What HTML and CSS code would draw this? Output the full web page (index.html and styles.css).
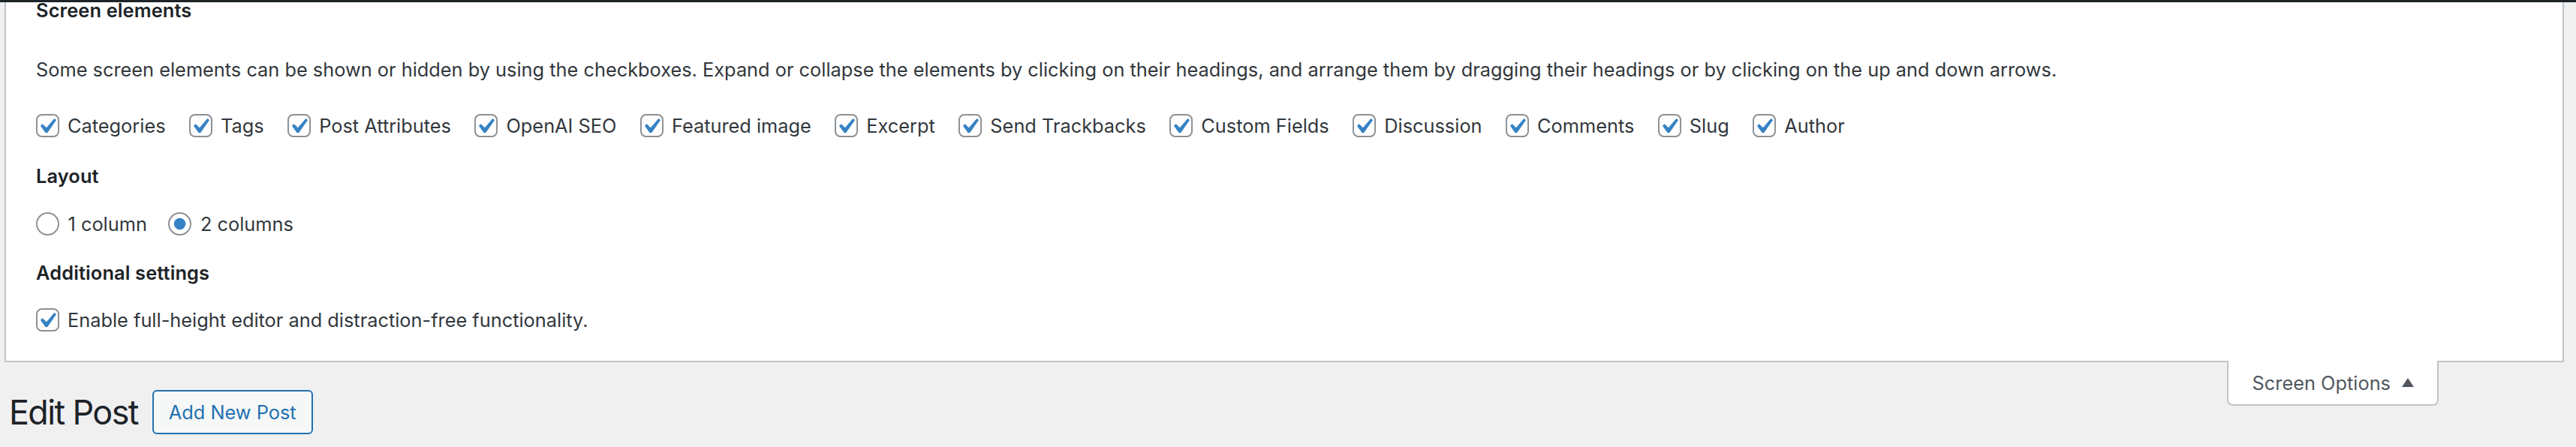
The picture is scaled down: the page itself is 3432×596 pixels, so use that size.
FILE: index.html
```html
<!DOCTYPE html>
<html lang="en">
<head>
<meta charset="utf-8">
<title>Edit Post</title>
<link rel="stylesheet" href="styles.css">
</head>
<body>
<div class="adminbar"></div>
<div class="screen-meta">
  <h5 class="legend first">Screen elements</h5>
  <p class="desc">Some screen elements can be shown or hidden by using the checkboxes. Expand or collapse the elements by clicking on their headings, and arrange them by dragging their headings or by clicking on the up and down arrows.</p>
  <div class="prefs row-elements">
    <label class="pref"><svg class="cb" viewBox="0 0 16 16"><rect x="0.5" y="0.5" width="15" height="15" rx="3.5"/><path transform="translate(-3 -2) scale(1.05)" d="M14.83 4.89l1.34.94-5.81 8.38H9.02L5.78 9.67l1.34-1.25 2.57 2.4z"/></svg><span>Categories</span></label>
    <label class="pref"><svg class="cb" viewBox="0 0 16 16"><rect x="0.5" y="0.5" width="15" height="15" rx="3.5"/><path transform="translate(-3 -2) scale(1.05)" d="M14.83 4.89l1.34.94-5.81 8.38H9.02L5.78 9.67l1.34-1.25 2.57 2.4z"/></svg><span>Tags</span></label>
    <label class="pref"><svg class="cb" viewBox="0 0 16 16"><rect x="0.5" y="0.5" width="15" height="15" rx="3.5"/><path transform="translate(-3 -2) scale(1.05)" d="M14.83 4.89l1.34.94-5.81 8.38H9.02L5.78 9.67l1.34-1.25 2.57 2.4z"/></svg><span>Post Attributes</span></label>
    <label class="pref"><svg class="cb" viewBox="0 0 16 16"><rect x="0.5" y="0.5" width="15" height="15" rx="3.5"/><path transform="translate(-3 -2) scale(1.05)" d="M14.83 4.89l1.34.94-5.81 8.38H9.02L5.78 9.67l1.34-1.25 2.57 2.4z"/></svg><span>OpenAI SEO</span></label>
    <label class="pref"><svg class="cb" viewBox="0 0 16 16"><rect x="0.5" y="0.5" width="15" height="15" rx="3.5"/><path transform="translate(-3 -2) scale(1.05)" d="M14.83 4.89l1.34.94-5.81 8.38H9.02L5.78 9.67l1.34-1.25 2.57 2.4z"/></svg><span>Featured image</span></label>
    <label class="pref"><svg class="cb" viewBox="0 0 16 16"><rect x="0.5" y="0.5" width="15" height="15" rx="3.5"/><path transform="translate(-3 -2) scale(1.05)" d="M14.83 4.89l1.34.94-5.81 8.38H9.02L5.78 9.67l1.34-1.25 2.57 2.4z"/></svg><span>Excerpt</span></label>
    <label class="pref"><svg class="cb" viewBox="0 0 16 16"><rect x="0.5" y="0.5" width="15" height="15" rx="3.5"/><path transform="translate(-3 -2) scale(1.05)" d="M14.83 4.89l1.34.94-5.81 8.38H9.02L5.78 9.67l1.34-1.25 2.57 2.4z"/></svg><span>Send Trackbacks</span></label>
    <label class="pref"><svg class="cb" viewBox="0 0 16 16"><rect x="0.5" y="0.5" width="15" height="15" rx="3.5"/><path transform="translate(-3 -2) scale(1.05)" d="M14.83 4.89l1.34.94-5.81 8.38H9.02L5.78 9.67l1.34-1.25 2.57 2.4z"/></svg><span>Custom Fields</span></label>
    <label class="pref"><svg class="cb" viewBox="0 0 16 16"><rect x="0.5" y="0.5" width="15" height="15" rx="3.5"/><path transform="translate(-3 -2) scale(1.05)" d="M14.83 4.89l1.34.94-5.81 8.38H9.02L5.78 9.67l1.34-1.25 2.57 2.4z"/></svg><span>Discussion</span></label>
    <label class="pref"><svg class="cb" viewBox="0 0 16 16"><rect x="0.5" y="0.5" width="15" height="15" rx="3.5"/><path transform="translate(-3 -2) scale(1.05)" d="M14.83 4.89l1.34.94-5.81 8.38H9.02L5.78 9.67l1.34-1.25 2.57 2.4z"/></svg><span>Comments</span></label>
    <label class="pref"><svg class="cb" viewBox="0 0 16 16"><rect x="0.5" y="0.5" width="15" height="15" rx="3.5"/><path transform="translate(-3 -2) scale(1.05)" d="M14.83 4.89l1.34.94-5.81 8.38H9.02L5.78 9.67l1.34-1.25 2.57 2.4z"/></svg><span>Slug</span></label>
    <label class="pref"><svg class="cb" viewBox="0 0 16 16"><rect x="0.5" y="0.5" width="15" height="15" rx="3.5"/><path transform="translate(-3 -2) scale(1.05)" d="M14.83 4.89l1.34.94-5.81 8.38H9.02L5.78 9.67l1.34-1.25 2.57 2.4z"/></svg><span>Author</span></label>
  </div>
  <h5 class="legend layout">Layout</h5>
  <div class="prefs row-radios">
    <label class="pref radio-pref"><svg class="rb" viewBox="0 0 16 16"><circle cx="8" cy="8" r="7.5"/></svg><span>1 column</span></label>
    <label class="pref radio-pref"><svg class="rb" viewBox="0 0 16 16"><circle cx="8" cy="8" r="7.5"/><circle class="dot" cx="8" cy="8" r="4"/></svg><span>2 columns</span></label>
  </div>
  <h5 class="legend additional">Additional settings</h5>
  <div class="prefs row-editor">
    <label class="pref"><svg class="cb" viewBox="0 0 16 16"><rect x="0.5" y="0.5" width="15" height="15" rx="3.5"/><path transform="translate(-3 -2) scale(1.05)" d="M14.83 4.89l1.34.94-5.81 8.38H9.02L5.78 9.67l1.34-1.25 2.57 2.4z"/></svg><span>Enable full-height editor and distraction-free functionality.</span></label>
  </div>
</div>
<div class="meta-links">
  <button class="show-settings" type="button"><span>Screen Options</span><svg class="arrow" viewBox="0 0 16 12"><polygon points="0,12 8,0 16,12"/></svg></button>
</div>
<div class="wrap">
  <h1 class="page-title">Edit Post</h1>
  <a class="page-title-action" href="#">Add New Post</a>
</div>
</body>
</html>
```

FILE: styles.css
```css
html, body {
  margin: 0;
  padding: 0;
}
body {
  background: #f0f0f1;
  color: #32373c;
  font-family: Inter, "Noto Sans", "Liberation Sans", sans-serif;
  font-size: 25.35px;
  width: 3432px;
  height: 596px;
  overflow: hidden;
}
.adminbar {
  position: fixed;
  top: 0;
  left: 0;
  right: 0;
  height: 3px;
  background: #1d2327;
  z-index: 10;
}
.screen-meta {
  margin: 0 16px 0 6px;
  background: #fff;
  border: 2px solid #c3c4c7;
  border-top: 0;
  padding: 0 40px 39.5px 40px;
}
.legend {
  margin: 0;
  font-size: 25.35px;
  font-weight: 600;
  letter-spacing: 0.15px;
  color: #1d2327;
  height: 27px;
  line-height: 27px;
}
.legend.first {
  height: 28px;
  line-height: 28px;
}
.legend.layout { margin-top: 38px; }
.legend.additional { margin-top: 35.5px; }
.desc {
  margin: 51px 0 0;
  height: 27px;
  line-height: 27px;
  white-space: nowrap;
}
.prefs {
  display: flex;
  align-items: center;
  height: 31px;
  column-gap: 31.5px;
}
.row-elements { margin-top: 46px; }
.row-radios { margin-top: 35px; column-gap: 28.5px; }
.row-editor { margin-top: 34px; }
.pref {
  display: flex;
  align-items: center;
  height: 31px;
  line-height: 31px;
  white-space: nowrap;
}
.cb, .rb {
  width: 31px;
  height: 31px;
  flex: none;
  margin-right: 11px;
}
.cb rect, .rb circle {
  fill: #fff;
  stroke: #8c8f94;
  stroke-width: 1;
}
.cb path { fill: #3582c4; }
.rb .dot { fill: #3582c4; stroke: none; }
.radio-pref .rb { margin-right: 11.5px; }
.meta-links {
  float: right;
  margin: -2px 183px 0 0;
}
.show-settings {
  display: flex;
  align-items: center;
  height: 60px;
  box-sizing: border-box;
  padding: 0 31px 0 32px;
  background: #fff;
  border: 2px solid #c3c4c7;
  border-top: 0;
  border-radius: 0 0 8px 8px;
  font-family: inherit;
  font-size: 25.35px;
  color: #50575e;
}
.arrow {
  width: 16px;
  height: 12px;
  margin-left: 15px;
  fill: #50575e;
}
.wrap {
  display: flex;
  align-items: center;
  margin: 37px 0 0 12px;
  height: 59px;
}
.page-title {
  margin: 0;
  font-size: 44.85px;
  font-weight: 400;
  letter-spacing: -1.6px;
  color: #1d2327;
}
.page-title-action {
  margin-left: 19px;
  display: flex;
  align-items: center;
  box-sizing: border-box;
  height: 59px;
  padding: 0 20px;
  border: 2px solid #2271b1;
  border-radius: 6px;
  background: #f6f7f7;
  color: #2271b1;
  text-decoration: none;
  font-size: 25.35px;
}
```
